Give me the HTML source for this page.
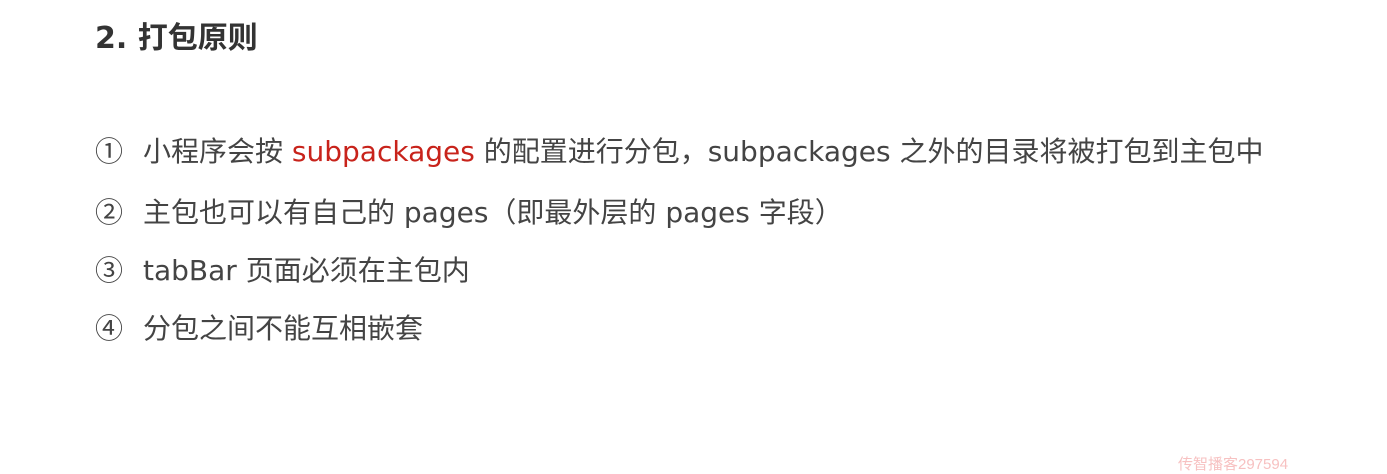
<!DOCTYPE html>
<html><head><meta charset="utf-8"><style>
body{margin:0;width:1387px;height:470px;background:#fff;overflow:hidden;position:relative;font-family:"DejaVu Sans","Noto Sans CJK SC",sans-serif;color:#444}
.t{position:absolute;left:95px;top:13px;font-size:30px;font-weight:bold;color:#333;font-family:"DejaVu Sans","Noto Sans CJK SC",sans-serif}
.l{position:absolute;left:95px;font-size:28px;white-space:nowrap;line-height:36px}
.n{display:inline-block;width:48px;font-family:"Noto Sans CJK SC",sans-serif;font-size:28px}
.r{color:#c8231b}
.w{position:absolute;left:1178px;top:453px;font-size:15px;color:#f7c1c1;font-family:"Liberation Sans","Noto Sans CJK SC",sans-serif}
</style></head><body>
<div class="t">2. 打包原则</div>
<div class="l" style="top:132px"><span class="n">①</span>小程序会按 <span class="r">subpackages</span> 的配置进行分包，subpackages 之外的目录将被打包到主包中</div>
<div class="l" style="top:193px"><span class="n">②</span>主包也可以有自己的 pages（即最外层的 pages 字段）</div>
<div class="l" style="top:251px"><span class="n">③</span>tabBar 页面必须在主包内</div>
<div class="l" style="top:309px"><span class="n">④</span>分包之间不能互相嵌套</div>
<div class="w">传智播客297594</div>
</body></html>
